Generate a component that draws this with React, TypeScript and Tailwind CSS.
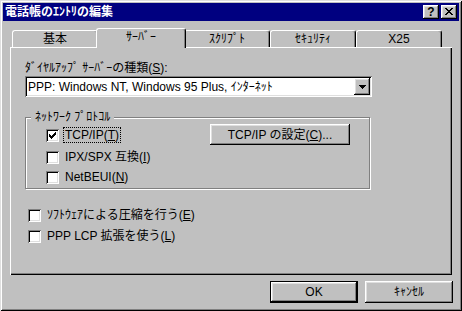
import React from "react";

const raised =
  "shadow-[inset_-1px_-1px_0_#000,inset_1px_1px_0_#fff,inset_-2px_-2px_0_#808080,inset_2px_2px_0_#dfdfdf]";
const sunken =
  "shadow-[inset_1px_1px_0_#808080,inset_-1px_-1px_0_#fff,inset_2px_2px_0_#000,inset_-2px_-2px_0_#dfdfdf]";

function CheckMark() {
  return (
    <svg width="7" height="7" viewBox="0 0 7 7" shapeRendering="crispEdges">
      <path
        fill="#000"
        d="M6 0h1v1h-1z M5 1h2v1h-2z M0 2h1v1h-1z M4 2h3v1h-3z M0 3h2v1h-2z M3 3h3v1h-3z M0 4h5v1h-5z M1 5h3v1h-3z M2 6h1v1h-1z"
      />
    </svg>
  );
}

function CheckBox({ checked, children, focus }: { checked?: boolean; children: React.ReactNode; focus?: boolean }) {
  return (
    <div className="flex h-[16px] items-center gap-[4px]">
      <div className={`flex h-[13px] w-[13px] items-center justify-center bg-white ${sunken}`}>
        {checked && <CheckMark />}
      </div>
      <span
        className={`px-[1px] leading-[14px] ${focus ? "border border-dotted border-black" : "border border-transparent"}`}
      >
        {children}
      </span>
    </div>
  );
}

function Tab({ label, selected }: { label: string; selected?: boolean }) {
  if (selected) {
    return (
      <div className="relative z-10 -mx-[2px] mb-[-1px] flex h-[20px] w-[90px] justify-center rounded-t-[3px] border-l border-t border-r border-l-white border-t-white border-r-black bg-[#c0c0c0] pt-[1px] shadow-[inset_-1px_0_0_#808080] leading-[14px]">
        {label}
      </div>
    );
  }
  return (
    <div className="flex h-[17px] w-[86px] justify-center rounded-t-[3px] border-l border-t border-r border-l-white border-t-white border-r-black pt-[1px] shadow-[inset_-1px_0_0_#808080] leading-[14px]">
      {label}
    </div>
  );
}

export default function App() {
  return (
    <div className="font-['Liberation_Sans','Noto_Sans_CJK_JP',sans-serif] text-[12px] text-black">
      <div className="flex h-[311px] w-[462px] flex-col bg-[#c0c0c0] p-[3px] shadow-[inset_1px_1px_0_#dfdfdf,inset_-1px_-1px_0_#000,inset_2px_2px_0_#fff,inset_-2px_-2px_0_#808080]">
        {/* title bar */}
        <div className="flex h-[18px] items-center justify-between bg-[#000080] pl-[2px] pr-[2px]">
          <span className="font-bold leading-[14px] text-white">電話帳のｴﾝﾄﾘの編集</span>
          <div className="flex gap-[2px]">
            <div
              className={`flex h-[14px] w-[16px] items-center justify-center bg-[#c0c0c0] pb-[1px] font-['Liberation_Sans',sans-serif] text-[12px] font-bold leading-[12px] text-black ${raised}`}
            >
              ?
            </div>
            <div className={`flex h-[14px] w-[16px] items-center justify-center bg-[#c0c0c0] pb-[1px] ${raised}`}>
              <svg width="8" height="7" viewBox="0 0 8 7" shapeRendering="crispEdges">
                <path
                  fill="#000"
                  d="M0 0h2v1h-2z M6 0h2v1h-2z M1 1h2v1h-2z M5 1h2v1h-2z M2 2h4v1h-4z M3 3h2v1h-2z M2 4h4v1h-4z M1 5h2v1h-2z M5 5h2v1h-2z M0 6h2v1h-2z M6 6h2v1h-2z"
                />
              </svg>
            </div>
          </div>
        </div>

        {/* body */}
        <div className="flex flex-1 flex-col px-[7px] pt-[7px]">
          <div className="flex items-end pl-[2px]">
            <Tab label="基本" />
            <Tab label="ｻｰﾊﾞｰ" selected />
            <Tab label="ｽｸﾘﾌﾟﾄ" />
            <Tab label="ｾｷｭﾘﾃｨ" />
            <Tab label="X25" />
          </div>

          <div className="flex h-[228px] flex-col pl-[15px] pt-[14px] shadow-[inset_1px_1px_0_#fff,inset_-1px_-1px_0_#000,inset_-2px_-2px_0_#808080]">
            <div className="leading-[14px]">
              ﾀﾞｲﾔﾙｱｯﾌﾟ ｻｰﾊﾞｰの種類(<u>S</u>):
            </div>
            <div className={`mt-[1px] flex h-[21px] w-[347px] items-center justify-between bg-white p-[2px] ${sunken}`}>
              <span className="pl-[1px] leading-[14px]">PPP: Windows NT, Windows 95 Plus, ｲﾝﾀｰﾈｯﾄ</span>
              <div className={`flex h-[17px] w-[16px] items-center justify-center bg-[#c0c0c0] ${raised}`}>
                <svg width="7" height="4" viewBox="0 0 7 4" shapeRendering="crispEdges">
                  <path fill="#000" d="M0 0h7v1h-7z M1 1h5v1h-5z M2 2h3v1h-3z M3 3h1v1h-1z" />
                </svg>
              </div>
            </div>

            {/* group box */}
            <div className="relative mt-[20px] h-[72px] w-[345px] border border-[#808080] pl-[20px] pt-[9px] shadow-[1px_1px_0_#fff,inset_1px_1px_0_#fff]">
              <span className="absolute left-[5px] top-[-8px] bg-[#c0c0c0] px-[4px] leading-[14px]">ﾈｯﾄﾜｰｸ ﾌﾟﾛﾄｺﾙ</span>
              <div className="flex items-start">
                <div className="flex w-[164px] flex-col">
                  <CheckBox checked focus>
                    TCP/IP(<u>T</u>)
                  </CheckBox>
                  <div className="mt-[6px]">
                    <CheckBox>
                      IPX/SPX 互換(<u>I</u>)
                    </CheckBox>
                  </div>
                  <div className="mt-[4px]">
                    <CheckBox>
                      NetBEUI(<u>N</u>)
                    </CheckBox>
                  </div>
                </div>
                <div className={`mt-[-3px] flex h-[21px] w-[140px] items-center justify-center leading-[14px] ${raised}`}>
                  TCP/IP の設定(<u>C</u>)...
                </div>
              </div>
            </div>

            <div className="ml-[3px] mt-[18px]">
              <CheckBox>
                ｿﾌﾄｳｪｱによる圧縮を行う(<u>E</u>)
              </CheckBox>
            </div>
            <div className="ml-[3px] mt-[5px]">
              <CheckBox>
                PPP LCP 拡張を使う(<u>L</u>)
              </CheckBox>
            </div>
          </div>

          <div className="mr-[-1px] mt-[6px] flex justify-end gap-[7px]">
            <div className="h-[22px] w-[88px] border border-black">
              <div className={`flex h-full w-full items-center justify-center leading-[14px] ${raised}`}>OK</div>
            </div>
            <div className={`flex h-[22px] w-[88px] items-center justify-center leading-[14px] ${raised}`}>ｷｬﾝｾﾙ</div>
          </div>
        </div>
      </div>
    </div>
  );
}
